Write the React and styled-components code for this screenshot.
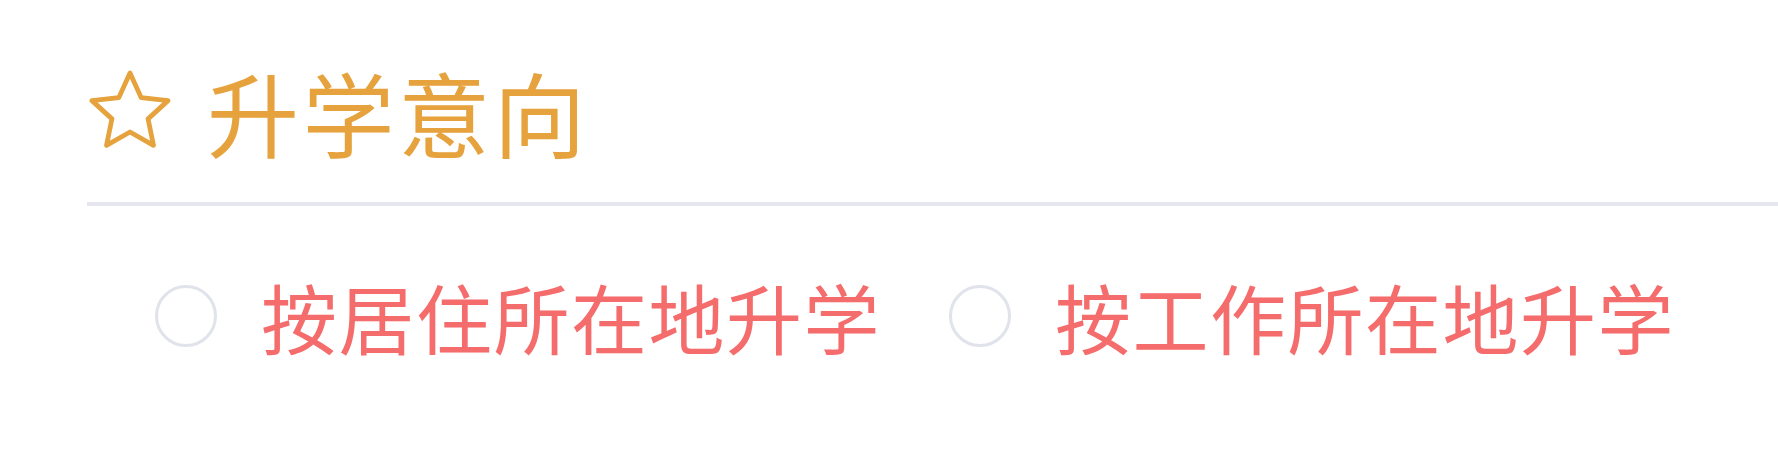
import React from "react";
import styled, { createGlobalStyle } from "styled-components";

const Global = createGlobalStyle`
  html, body { margin: 0; padding: 0; background: #ffffff; }
  body { font-family: "Noto Sans CJK SC", "Noto Sans", sans-serif; }
`;

const Section = styled.section`
  width: 1778px;
  height: 449px;
  box-sizing: border-box;
  padding: 64px 0 0 87px;
  background: #ffffff;
`;

const Header = styled.div`
  display: flex;
  align-items: center;
  gap: 36px;
  padding: 0 0 44px 2px;
  border-bottom: 4px solid #e6e6ef;
`;

const Title = styled.h2`
  margin: 0;
  font-size: 92px;
  line-height: 94px;
  font-weight: 400;
  color: #e6a23c;
  letter-spacing: 3.5px;
`;

const RadioGroup = styled.div`
  display: flex;
  align-items: center;
  padding: 72px 0 0 68px;
`;

const RadioItem = styled.label`
  display: flex;
  align-items: center;
  gap: 44px;
  margin-right: 68px;
  cursor: pointer;
`;

const Circle = styled.span`
  display: inline-block;
  box-sizing: border-box;
  width: 62px;
  height: 62px;
  border-radius: 50%;
  border: 3px solid #e1e3eb;
  background: #ffffff;
`;

const Label = styled.span`
  font-size: 76px;
  line-height: 76px;
  color: #f56c6c;
  letter-spacing: 1.5px;
`;

const StarIcon = () => {
  const cx = 41, cy = 44, R = 40, r = 19;
  const pts = [];
  for (let i = 0; i < 10; i++) {
    const a = (-90 + i * 36) * Math.PI / 180;
    const rad = i % 2 === 0 ? R : r;
    pts.push(`${(cx + rad * Math.cos(a)).toFixed(2)},${(cy + rad * Math.sin(a)).toFixed(2)}`);
  }
  return (
    <svg width="82" height="84" viewBox="0 0 82 84" aria-hidden="true">
      <polygon
        points={pts.join(" ")}
        fill="none"
        stroke="#e6a23c"
        strokeWidth="4.8"
        strokeLinejoin="round"
      />
    </svg>
  );
};

const options = ["按居住所在地升学", "按工作所在地升学"];

export default function App() {
  return (
    <>
      <Global />
      <Section>
        <Header>
          <StarIcon />
          <Title>升学意向</Title>
        </Header>
        <RadioGroup>
          {options.map((o) => (
            <RadioItem key={o}>
              <Circle />
              <Label>{o}</Label>
            </RadioItem>
          ))}
        </RadioGroup>
      </Section>
    </>
  );
}
